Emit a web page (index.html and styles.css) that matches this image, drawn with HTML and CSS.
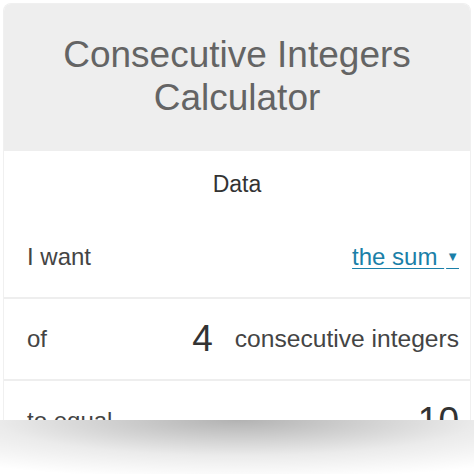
FILE: index.html
```html
<!DOCTYPE html>
<html lang="en">
<head>
    <meta charset="UTF-8">
    <meta name="viewport" content="width=device-width, initial-scale=1.0">
    <title>Consecutive Integers Calculator</title>
    <link rel="stylesheet" href="styles.css">
</head>
<body>
    <div class="page">
        <div class="card">
            <section class="header">
                <h1>Consecutive Integers<br>Calculator</h1>
            </section>
            <div class="section-title">Data</div>
            <div class="row">
                <span class="label">I want</span>
                <a href="#" class="select">the sum <span class="caret">&#9660;</span></a>
            </div>
            <div class="row">
                <span class="label">of</span>
                <span class="value-group">
                    <span class="num">4</span>
                    <span class="unit">consecutive integers</span>
                </span>
            </div>
            <div class="row">
                <span class="label">to equal</span>
                <span class="num">10</span>
            </div>
        </div>
        <div class="fade"></div>
    </div>
</body>
</html>
```

FILE: styles.css
```css
:root {
    --header-bg: #eeeeee;
    --title-color: #646464;
    --text-color: #444444;
    --link-color: #1a7fa8;
    --line-color: #eeeeee;
}

* {
    margin: 0;
    padding: 0;
    box-sizing: border-box;
    font-family: 'Liberation Sans', Arial, sans-serif;
}

body {
    background-color: #ffffff;
}

.page {
    width: 474px;
    padding: 3px 3px 0 3px;
}

.card {
    height: 417px;
    overflow: hidden;
    border: 1px solid #f0f0f0;
    border-bottom: none;
    border-radius: 8px 8px 0 0;
    background: #fff;
}

.header {
    height: 147px;
    background-color: var(--header-bg);
    display: flex;
    align-items: center;
    justify-content: center;
    padding-bottom: 4px;
}

.header h1 {
    font-size: 37px;
    font-weight: normal;
    line-height: 43px;
    color: var(--title-color);
    text-align: center;
}

.section-title {
    height: 66px;
    display: flex;
    align-items: center;
    justify-content: center;
    font-size: 23px;
    color: #333;
}

.row {
    height: 82px;
    display: flex;
    align-items: center;
    justify-content: space-between;
    padding: 0 11px 0 23px;
    border-bottom: 2px solid var(--line-color);
    color: var(--text-color);
    font-size: 24px;
}

.select {
    color: var(--link-color);
    text-decoration: underline;
    text-underline-offset: 3px;
    text-decoration-thickness: 1px;
}

.caret {
    font-size: 13px;
    vertical-align: 4px;
    margin-left: 2px;
}

.value-group {
    display: flex;
    align-items: center;
    gap: 22px;
}

.unit {
    font-size: 24.6px;
}

.num {
    font-size: 37px;
    color: #333;
}

.fade {
    height: 54px;
    margin: 0 -3px;
    background: radial-gradient(ellipse 85% 110% at 50% 0, rgba(0, 0, 0, 0.3), rgba(0, 0, 0, 0.08) 60%, rgba(0, 0, 0, 0));
}
```
